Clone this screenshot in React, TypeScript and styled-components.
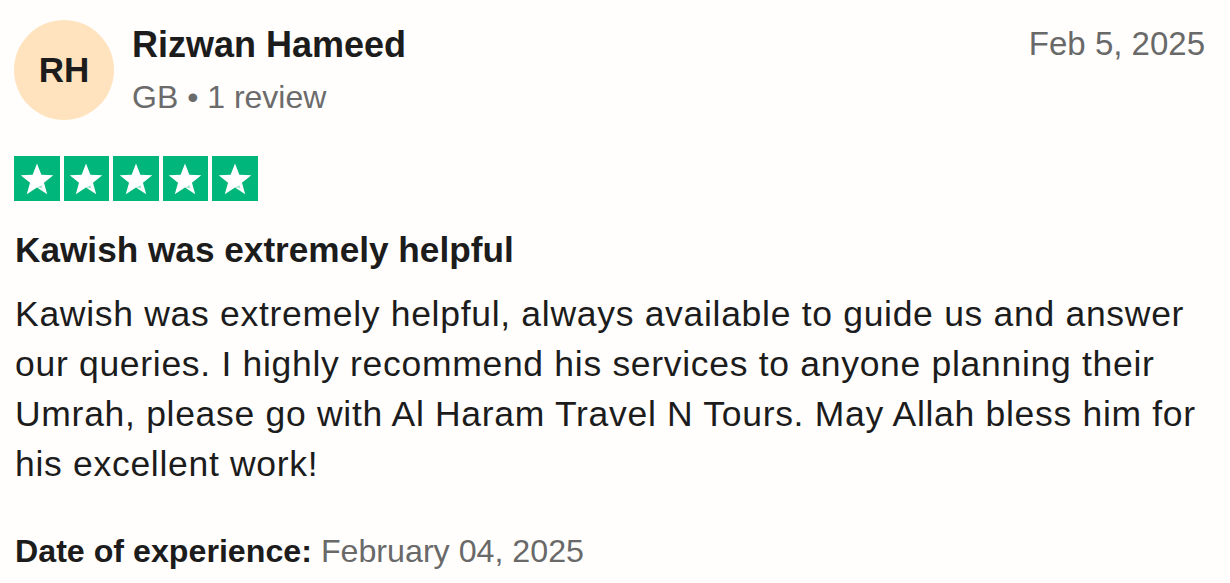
import React from "react";
import styled, { createGlobalStyle } from "styled-components";

const GlobalStyle = createGlobalStyle`
  * {
    box-sizing: border-box;
  }

  body {
    margin: 0;
    background: #fffefc;
    font-family: "Liberation Sans", Arial, sans-serif;
    color: #1c1c1c;
  }
`;

const review = {
  initials: "RH",
  name: "Rizwan Hameed",
  country: "GB",
  reviewCount: 1,
  published: "Feb 5, 2025",
  rating: 5,
  title: "Kawish was extremely helpful",
  body: "Kawish was extremely helpful, always available to guide us and answer our queries. I highly recommend his services to anyone planning their Umrah, please go with Al Haram Travel N Tours. May Allah bless him for his excellent work!",
  experienced: "February 04, 2025",
};

const Star = () => (
  <svg width="38" height="38" viewBox="0 0 24 24">
    <path
      d="M12 2.2l2.75 7.1 7.55.3-5.9 4.7 2.05 7.3L12 17.4l-6.45 4.2 2.05-7.3-5.9-4.7 7.55-.3z"
      fill="#ffffff"
    />
    <path d="M14.9 15.9l.55 2 -3.45-.5z" fill="#00b67a" opacity="0.35" />
  </svg>
);

const App = () => {
  return (
    <>
      <GlobalStyle />
      <Card>
        <Header>
          <Avatar>{review.initials}</Avatar>
          <Consumer>
            <Name>{review.name}</Name>
            <Meta>
              {review.country} • {review.reviewCount} review
            </Meta>
          </Consumer>
          <Published>{review.published}</Published>
        </Header>
        <Stars>
          {Array.from({ length: review.rating }).map((_, i) => (
            <StarBox key={i}>
              <Star />
            </StarBox>
          ))}
        </Stars>
        <Title>{review.title}</Title>
        <Body>{review.body}</Body>
        <Experience>
          <strong>Date of experience:</strong> {review.experienced}
        </Experience>
      </Card>
    </>
  );
};

export default App;

const Card = styled.article`
  display: flex;
  flex-direction: column;
  padding: 20px 25px 0 14px;
  width: 1230px;
`;

const Header = styled.div`
  display: flex;
  align-items: flex-start;
`;

const Avatar = styled.div`
  width: 100px;
  height: 100px;
  border-radius: 50%;
  background: #ffe3be;
  display: flex;
  align-items: center;
  justify-content: center;
  font-size: 35px;
  font-weight: 700;
  color: #1c1c1c;
  flex-shrink: 0;
`;

const Consumer = styled.div`
  display: flex;
  flex-direction: column;
  margin-left: 18px;
  flex: 1;
`;

const Name = styled.span`
  font-size: 36px;
  font-weight: 700;
  line-height: 50px;
  color: #1c1c1c;
`;

const Meta = styled.span`
  font-size: 32px;
  line-height: 44px;
  color: #6b6b6b;
  margin-top: 5px;
`;

const Published = styled.time`
  font-size: 33px;
  line-height: 48px;
  color: #696969;
`;

const Stars = styled.div`
  display: flex;
  gap: 4px;
  margin-top: 36px;
`;

const StarBox = styled.div`
  width: 45.5px;
  height: 45px;
  background: #00b67a;
  display: flex;
  align-items: center;
  justify-content: center;
`;

const Title = styled.h2`
  margin: 24px 0 0 1px;
  font-size: 35.2px;
  font-weight: 700;
  line-height: 50px;
  color: #1c1c1c;
`;

const Body = styled.p`
  margin: 14px 0 0 1px;
  font-size: 35.5px;
  letter-spacing: 0.7px;
  line-height: 50px;
  color: #1c1c1c;
`;

const Experience = styled.p`
  margin: 40px 0 0 1px;
  font-size: 32.2px;
  line-height: 44px;
  color: #696969;

  strong {
    color: #1c1c1c;
  }
`;
